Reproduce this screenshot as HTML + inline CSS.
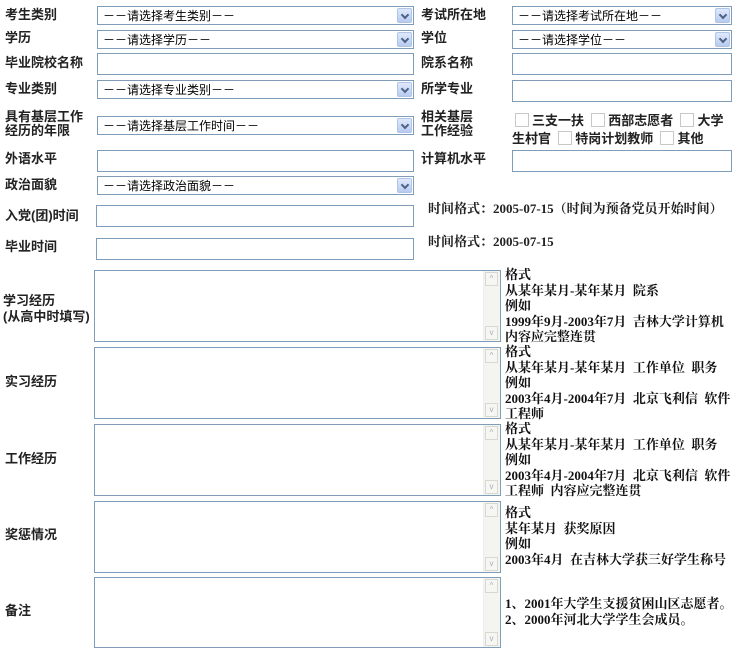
<!DOCTYPE html>
<html><head><meta charset="utf-8"><style>
body{margin:0;width:733px;height:651px;background:#fff;position:relative;overflow:hidden;font-family:"Liberation Sans","Noto Sans CJK SC",sans-serif;font-size:12px;color:#000}
.l{position:absolute;font-weight:bold;font-size:13px;color:#222;line-height:14px;white-space:nowrap}
.s,.i{position:absolute;border:1px solid #7f9db9;box-sizing:border-box;background:#fff}
.s span{position:absolute;left:5px;top:2px;font-size:12px;line-height:14px;white-space:nowrap}
.s b{position:absolute;right:1px;top:1px;bottom:1px;width:15px;background:linear-gradient(#dfe9fb,#b7cbf0);border:1px solid #b0c4e8;box-sizing:border-box;border-radius:2px}
.s b:after{content:"";position:absolute;left:4px;top:3px;width:4px;height:4px;border-right:2px solid #4d6185;border-bottom:2px solid #4d6185;transform:rotate(45deg)}
.t{position:absolute;border:1px solid #7f9db9;box-sizing:border-box;background:#fff;left:94px;width:407px;height:72px}
.t i{position:absolute;right:0;top:0;bottom:0;width:16px;background:#f4f4f0;border-left:1px solid #eee}
.t i:before,.t i:after{position:absolute;left:1px;width:13px;height:14px;border:1px solid #d8d8d0;box-sizing:border-box;background:#f6f6f2;color:#aab;font-size:8px;line-height:12px;text-align:center;font-style:normal}
.t i:before{content:"^";top:1px}.t i:after{content:"v";bottom:1px}
.r{position:absolute;left:505px;font-weight:bold;font-family:"Liberation Serif","Noto Serif CJK SC",serif;font-size:13px;line-height:15.5px;white-space:nowrap;color:#111}
.c{display:inline-block;width:12px;height:12px;border:1px solid #c8c8c8;vertical-align:-2px;margin-right:3px}
</style></head><body>
<div class="l" style="left:5px;top:8px">考生类别</div>
<div class="s" style="left:97px;top:6px;width:317px;height:19px"><span>－－请选择考生类别－－</span><b></b></div>
<div class="l" style="left:421px;top:8px">考试所在地</div>
<div class="s" style="left:512px;top:6px;width:220px;height:19px"><span>－－请选择考试所在地－－</span><b></b></div>

<div class="l" style="left:5px;top:31px">学历</div>
<div class="s" style="left:97px;top:30px;width:317px;height:19px"><span>－－请选择学历－－</span><b></b></div>
<div class="l" style="left:421px;top:31px">学位</div>
<div class="s" style="left:512px;top:30px;width:220px;height:19px"><span>－－请选择学位－－</span><b></b></div>

<div class="l" style="left:5px;top:56px">毕业院校名称</div>
<div class="i" style="left:97px;top:53px;width:317px;height:22px"></div>
<div class="l" style="left:421px;top:56px">院系名称</div>
<div class="i" style="left:512px;top:53px;width:220px;height:22px"></div>

<div class="l" style="left:5px;top:82px">专业类别</div>
<div class="s" style="left:97px;top:80px;width:317px;height:19px"><span>－－请选择专业类别－－</span><b></b></div>
<div class="l" style="left:421px;top:82px">所学专业</div>
<div class="i" style="left:512px;top:80px;width:220px;height:22px"></div>

<div class="l" style="left:5px;top:110px">具有基层工作<br>经历的年限</div>
<div class="s" style="left:97px;top:116px;width:317px;height:19px"><span>－－请选择基层工作时间－－</span><b></b></div>
<div class="l" style="left:421px;top:110px">相关基层<br>工作经验</div>
<div class="l" style="left:515px;top:111px;line-height:20px"><span class="c"></span>三支一扶 &nbsp;<span class="c"></span>西部志愿者 &nbsp;<span class="c"></span>大学</div>
<div class="l" style="left:512px;top:131px;line-height:14px"><span>生村官</span> &nbsp;<span class="c"></span>特岗计划教师 &nbsp;<span class="c"></span>其他</div>

<div class="l" style="left:5px;top:152px">外语水平</div>
<div class="i" style="left:97px;top:150px;width:317px;height:22px"></div>
<div class="l" style="left:421px;top:152px">计算机水平</div>
<div class="i" style="left:512px;top:150px;width:220px;height:22px"></div>

<div class="l" style="left:5px;top:178px">政治面貌</div>
<div class="s" style="left:97px;top:176px;width:317px;height:19px"><span>－－请选择政治面貌－－</span><b></b></div>

<div class="l" style="left:5px;top:209px">入党(团)时间</div>
<div class="i" style="left:96px;top:205px;width:318px;height:22px"></div>
<div class="l" style="left:428px;top:202px;font-family:'Liberation Serif','Noto Serif CJK SC',serif">时间格式：2005-07-15（时间为预备党员开始时间）</div>

<div class="l" style="left:5px;top:240px">毕业时间</div>
<div class="i" style="left:96px;top:238px;width:318px;height:22px"></div>
<div class="l" style="left:428px;top:235px;font-family:'Liberation Serif','Noto Serif CJK SC',serif">时间格式：2005-07-15</div>

<div class="l" style="left:3px;top:293px;line-height:16px">学习经历<br>(从高中时填写)</div>
<div class="t" style="top:270px"><i></i></div>
<div class="r" style="top:267px">格式<br>从某年某月-某年某月 &nbsp;院系<br>例如<br>1999年9月-2003年7月 &nbsp;吉林大学计算机<br>内容应完整连贯</div>

<div class="l" style="left:5px;top:375px">实习经历</div>
<div class="t" style="top:347px"><i></i></div>
<div class="r" style="top:344px">格式<br>从某年某月-某年某月 &nbsp;工作单位 &nbsp;职务<br>例如<br>2003年4月-2004年7月 &nbsp;北京飞利信 &nbsp;软件<br>工程师</div>

<div class="l" style="left:5px;top:452px">工作经历</div>
<div class="t" style="top:424px"><i></i></div>
<div class="r" style="top:421px">格式<br>从某年某月-某年某月 &nbsp;工作单位 &nbsp;职务<br>例如<br>2003年4月-2004年7月 &nbsp;北京飞利信 &nbsp;软件<br>工程师 &nbsp;内容应完整连贯</div>

<div class="l" style="left:5px;top:528px">奖惩情况</div>
<div class="t" style="top:501px"><i></i></div>
<div class="r" style="top:505px">格式<br>某年某月 &nbsp;获奖原因<br>例如<br>2003年4月 &nbsp;在吉林大学获三好学生称号</div>

<div class="l" style="left:5px;top:604px">备注</div>
<div class="t" style="top:577px;height:71px"><i></i></div>
<div class="r" style="top:596px">1、2001年大学生支援贫困山区志愿者。<br>2、2000年河北大学学生会成员。</div>
</body></html>
